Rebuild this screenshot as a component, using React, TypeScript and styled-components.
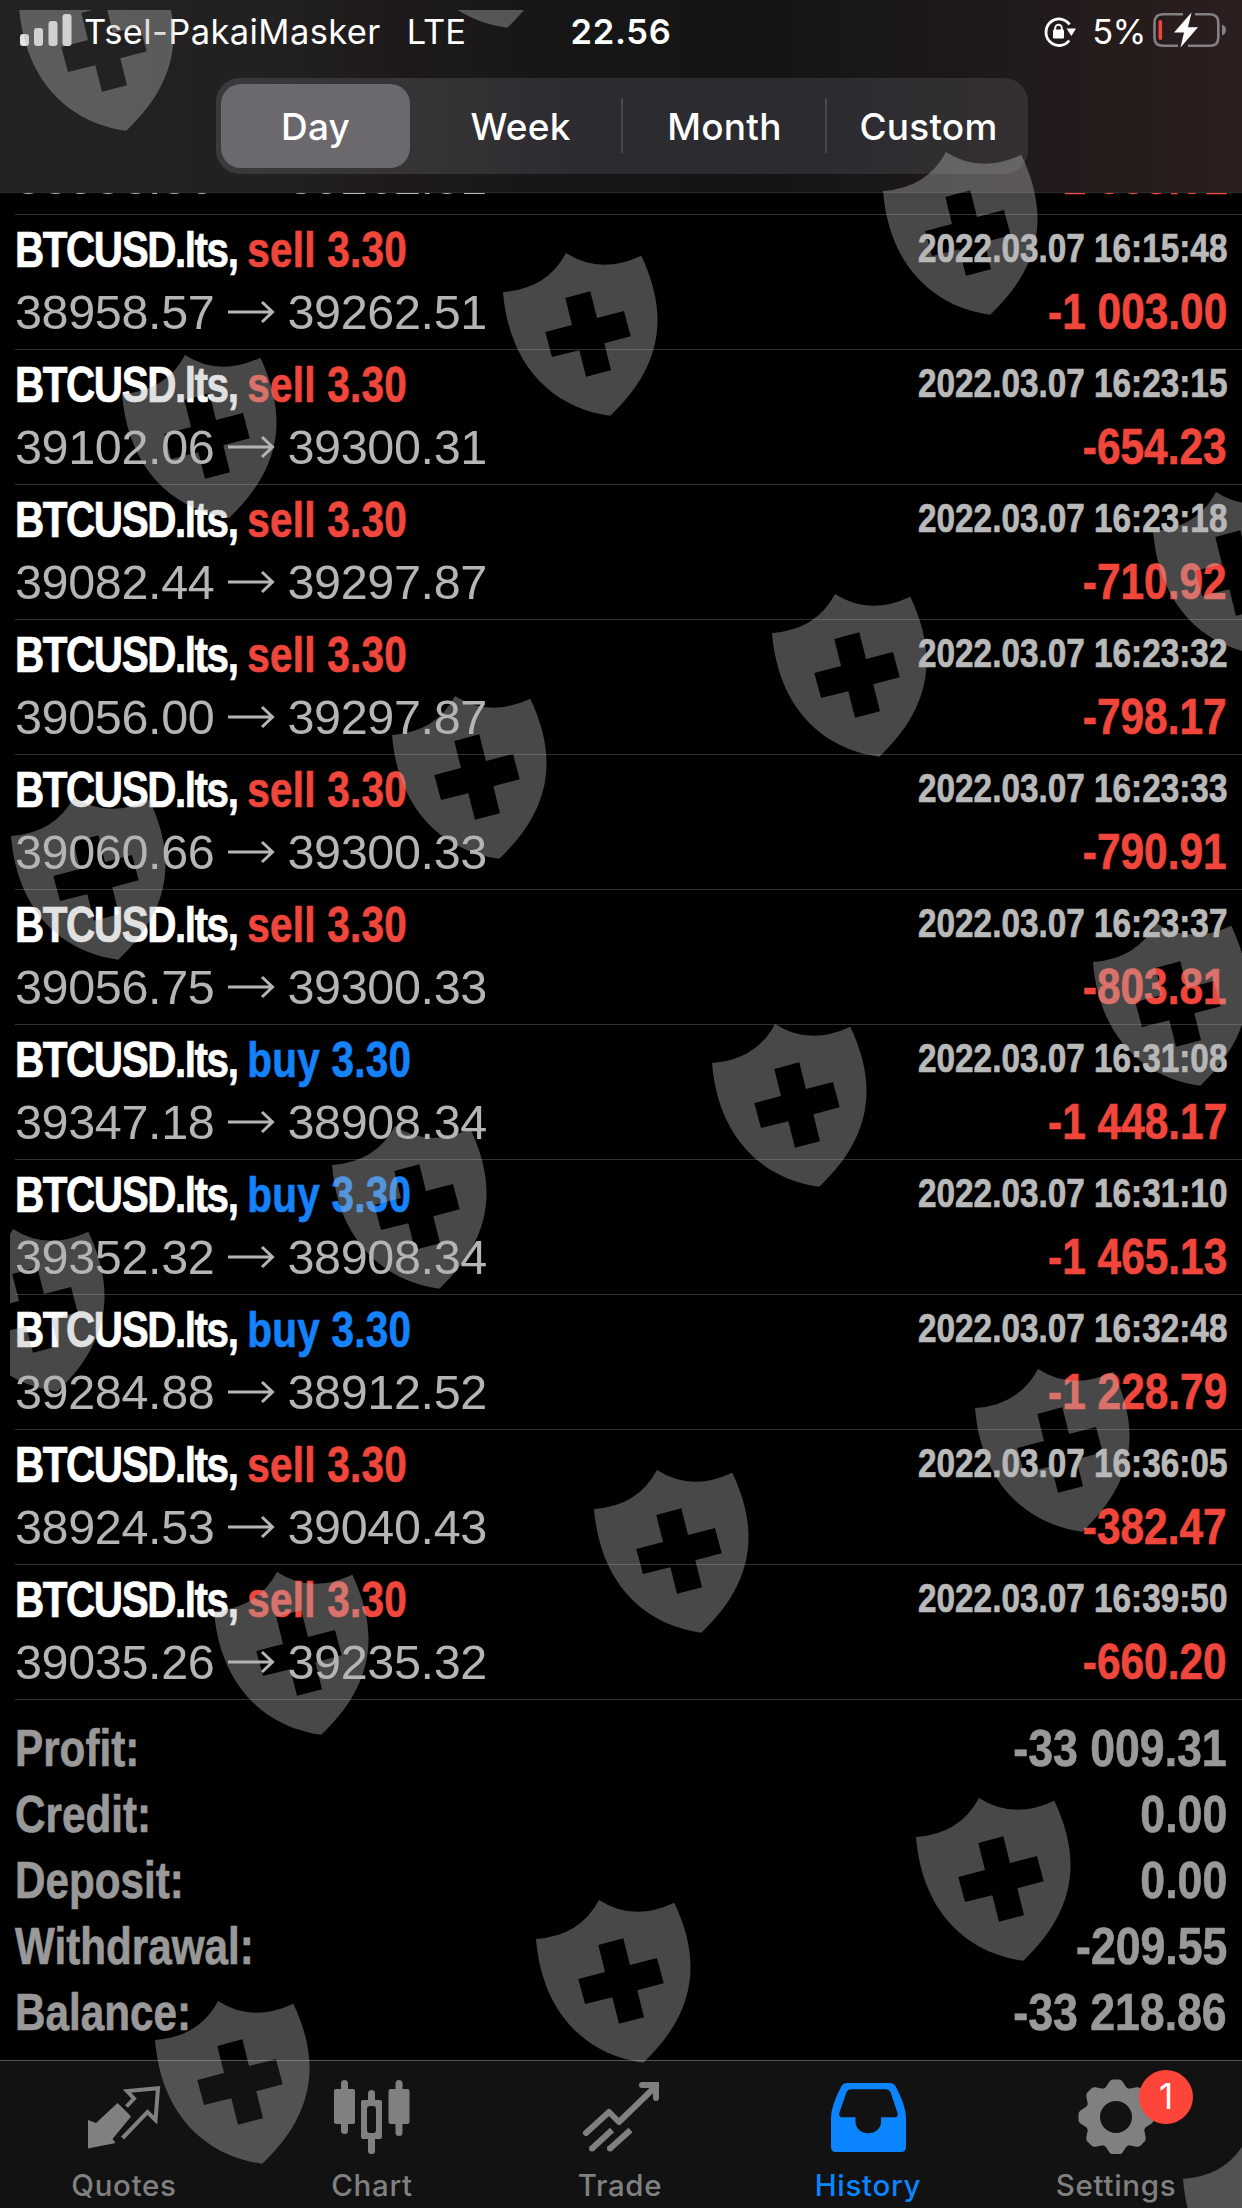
import styled, { createGlobalStyle } from "styled-components";

const GlobalStyle = createGlobalStyle`
  * {
    box-sizing: border-box;
  }
  body {
    margin: 0;
    background-color: black;
  }
`;

const Wrapper = styled.div`
  position: relative;
  display: flex;
  flex-direction: column;
  width: 1242px;
  height: 2208px;
  overflow: hidden;
  background-color: black;
  font-family: "Liberation Sans", Arial, sans-serif;
  white-space: nowrap;
`;

const Header = styled.header`
  height: 193px;
  flex-shrink: 0;
  border-bottom: 1px solid #2c2b2b;
  background: linear-gradient(
    90deg,
    #232323 0%,
    #222020 22%,
    #1e1a1b 32%,
    #161616 45%,
    #151515 62%,
    #1e1919 78%,
    #2c1e1e 100%
  );
  font-family: Inter, sans-serif;
  color: white;
`;

const StatusBar = styled.div`
  display: grid;
  grid-template-columns: 1fr auto 1fr;
  height: 78px;
  padding: 0 15px 0 20px;
  line-height: 63px;
  font-size: 34.5px;
`;

const StatusSide = styled.div<{ $end?: boolean }>`
  display: flex;
  align-items: flex-start;
  justify-content: ${(props) => (props.$end ? "flex-end" : "flex-start")};
  svg {
    flex-shrink: 0;
  }
`;

const Carrier = styled.span`
  margin: 0 26px 0 12px;
  letter-spacing: 0.4px;
`;

const Clock = styled.span`
  margin-right: 5px;
  font-weight: 600;
  letter-spacing: 0.7px;
`;

const Percent = styled.span`
  margin: 0 7px 0 15px;
  letter-spacing: -0.5px;
`;

const Segments = styled.div`
  display: flex;
  width: 812px;
  height: 96px;
  margin-left: 216px;
  padding: 6px 0 6px 5px;
  border-radius: 24px;
  background: linear-gradient(90deg, #3a393c 0%, #353235 30%, #2c2b30 45%, #2c2b30 75%, #343031 100%);
`;

const Segment = styled.div<{ $selected?: boolean; $divider?: boolean }>`
  position: relative;
  display: flex;
  align-items: center;
  justify-content: center;
  flex-shrink: 0;
  width: ${(props) => (props.$selected ? 189 : 204)}px;
  margin-right: ${(props) => (props.$selected ? 8.5 : 0)}px;
  border-radius: 20px;
  background-color: ${(props) => (props.$selected ? "#6b696d" : "transparent")};
  font-size: 37px;
  font-weight: 500;
  letter-spacing: 0.2px;
  &::after {
    content: "";
    display: ${(props) => (props.$divider ? "block" : "none")};
    position: absolute;
    right: 0;
    top: 14px;
    width: 2px;
    height: 55px;
    background-color: #49484c;
  }
`;

const History = styled.main`
  flex: 1;
  min-height: 0;
  overflow: hidden;
`;

const Deal = styled.div`
  height: 135px;
  margin-left: 15px;
  padding: 5px 15px 0 0;
  border-top: 1px solid #323232;
`;

// the deal scrolled under the header, only the bottom of its prices shows
const ClippedDeal = styled.div`
  display: flex;
  flex-direction: column;
  justify-content: flex-end;
  height: 21px;
  margin-left: 15px;
  padding: 0 15px 5px 0;
  overflow: hidden;
`;

const DealLine = styled.div<{ $height: number }>`
  display: flex;
  flex-shrink: 0;
  justify-content: space-between;
  height: ${(props) => props.$height}px;
`;

const Squeezed = styled.span<{ $scale: number; $right?: boolean }>`
  display: block;
  font-weight: 700;
  -webkit-text-stroke: 0.7px currentColor;
  transform: scaleX(${(props) => props.$scale});
  transform-origin: ${(props) => (props.$right ? "right" : "left")} center;
`;

const Title = styled(Squeezed)`
  color: white;
  font-size: 50px;
  line-height: 60px;
`;

const Ticker = styled.span`
  letter-spacing: -1.8px;
`;

const Side = styled.span<{ $buy: boolean }>`
  color: ${(props) => (props.$buy ? "#1482fb" : "#f0463b")};
  letter-spacing: 0.3px;
`;

const Time = styled(Squeezed)`
  color: #b9b9b9;
  font-size: 40px;
  line-height: 57px;
`;

const Prices = styled.div`
  display: flex;
  align-items: center;
  color: #b5b5b5;
  font-size: 48.5px;
  letter-spacing: -0.35px;
  line-height: 65px;
  svg {
    margin: 0 12.5px;
  }
`;

const Profit = styled(Squeezed)`
  color: #f0463b;
  font-size: 50px;
  line-height: 65px;
`;

const Summary = styled.div`
  margin-left: 15px;
  padding: 15px 15px 0 0;
  border-top: 1px solid #323232;
`;

const SummaryRow = styled.div`
  display: flex;
  justify-content: space-between;
  color: #999;
  font-size: 52px;
  line-height: 66px;
`;

const TabBar = styled.nav`
  display: grid;
  grid-template-columns: repeat(5, 1fr);
  flex-shrink: 0;
  height: 148px;
  padding-right: 2px;
  border-top: 1px solid #555;
  background-color: #121212;
`;

const Tab = styled.div<{ $active?: boolean }>`
  position: relative;
  display: flex;
  flex-direction: column;
  align-items: center;
  padding-top: 15px;
  color: ${(props) => (props.$active ? "#0b84ff" : "#808080")};
  font-family: Inter, sans-serif;
  font-size: 29.5px;
  font-weight: 500;
  letter-spacing: 0.7px;
  line-height: 40px;
  svg {
    margin-bottom: 11px;
  }
`;

const Badge = styled.span`
  position: absolute;
  left: 147px;
  top: 9px;
  width: 54px;
  height: 54px;
  border-radius: 50%;
  background-color: #ff453a;
  color: white;
  font-size: 35px;
  font-weight: 400;
  line-height: 53px;
  letter-spacing: 0;
  text-align: center;
`;

const Overlay = styled.div`
  position: absolute;
  left: 10px;
  top: 10px;
  right: 0;
  bottom: 0;
  overflow: hidden;
  pointer-events: none;
`;

const ShieldMark = styled.svg<{ $x: number; $y: number }>`
  position: absolute;
  left: ${(props) => props.$x - 10}px;
  top: ${(props) => props.$y - 10}px;
`;

const deals = [
  { side: "sell", time: "2022.03.07 16:15:48", open: "38958.57", close: "39262.51", profit: "-1 003.00" },
  { side: "sell", time: "2022.03.07 16:23:15", open: "39102.06", close: "39300.31", profit: "-654.23" },
  { side: "sell", time: "2022.03.07 16:23:18", open: "39082.44", close: "39297.87", profit: "-710.92" },
  { side: "sell", time: "2022.03.07 16:23:32", open: "39056.00", close: "39297.87", profit: "-798.17" },
  { side: "sell", time: "2022.03.07 16:23:33", open: "39060.66", close: "39300.33", profit: "-790.91" },
  { side: "sell", time: "2022.03.07 16:23:37", open: "39056.75", close: "39300.33", profit: "-803.81" },
  { side: "buy", time: "2022.03.07 16:31:08", open: "39347.18", close: "38908.34", profit: "-1 448.17" },
  { side: "buy", time: "2022.03.07 16:31:10", open: "39352.32", close: "38908.34", profit: "-1 465.13" },
  { side: "buy", time: "2022.03.07 16:32:48", open: "39284.88", close: "38912.52", profit: "-1 228.79" },
  { side: "sell", time: "2022.03.07 16:36:05", open: "38924.53", close: "39040.43", profit: "-382.47" },
  { side: "sell", time: "2022.03.07 16:39:50", open: "39035.26", close: "39235.32", profit: "-660.20" },
];

const summary = [
  ["Profit:", "-33 009.31"],
  ["Credit:", "0.00"],
  ["Deposit:", "0.00"],
  ["Withdrawal:", "-209.55"],
  ["Balance:", "-33 218.86"],
];

const shields = [
  [19.3, -32],
  [399.7, -135],
  [883, 152],
  [502.7, 253],
  [122, 354.7],
  [1152.7, 492.3],
  [772, 593.7],
  [391.5, 695.5],
  [11, 797],
  [1093, 922.5],
  [712.3, 1024],
  [331.5, 1126],
  [-50, 1228.5],
  [974.8, 1368.5],
  [594, 1470],
  [213.7, 1571.5],
  [916, 1798],
  [535.5, 1899.7],
  [155, 2001.3],
  [1183, 2140],
];

function Shield({ x, y }: { x: number; y: number }) {
  return (
    <ShieldMark $x={x} $y={y} width="156" height="164" viewBox="0 0 156 164">
      <path
        fill="#b4b4b4"
        fillOpacity="0.4"
        fillRule="evenodd"
        d="M0 39Q44 36 63 0Q97 22 138.3 2.7C164 57 163 110 107.3 162.7C50 155 6 113 0 39Z
          M62.3 45L87.3 38.3L94 65L121 58L127.7 83.3L101.3 90.3L108 117.3L83 123.7L76.3 97.3L49 104L42.3 79L69 72Z"
      />
    </ShieldMark>
  );
}

function SignalIcon() {
  return (
    <svg width="52" height="50" fill="#e4e4e4">
      <rect x="0" y="34" width="9" height="12" rx="3" />
      <rect x="14" y="28" width="9" height="18" rx="3" />
      <rect x="28.5" y="21" width="9" height="25" rx="3" />
      <rect x="42.5" y="14" width="9" height="32" rx="3" />
    </svg>
  );
}

function RotationLockIcon() {
  return (
    <svg width="34" height="50" fill="none" stroke="white" strokeWidth="2.8">
      <path d="M26.6 24.5A13 13.3 0 1 0 26.2 40.5" />
      <path d="M23.5 28.5H33L28.4 36Z" fill="white" stroke="none" />
      <rect x="10" y="29.5" width="11" height="9" rx="1.2" fill="white" stroke="none" />
      <path d="M12.2 31V28A3.3 3.3 0 0 1 18.8 28V31" strokeWidth="1.9" />
    </svg>
  );
}

function BatteryIcon() {
  return (
    <svg width="74" height="54">
      <path d="M30 14.2H10Q1.5 14.2 1.5 23V37.5Q1.5 45.8 10 45.8H25" fill="none" stroke="#848080" strokeWidth="2.6" />
      <path d="M42 14.2H57Q65.3 14.2 65.3 23V37.5Q65.3 45.8 57 45.8H35" fill="none" stroke="#848080" strokeWidth="2.6" />
      <path d="M69 24.5Q73 26 73 30Q73 34 69 35.5Z" fill="#848080" />
      <rect x="5.5" y="20" width="3.6" height="20" rx="1.8" fill="#f0463b" />
      <path d="M38.5 12.5L21 32.5H31L27.5 47.5L45 27.3H35Z" fill="white" />
    </svg>
  );
}

function ArrowIcon() {
  return (
    <svg width="48" height="24" fill="none" stroke="#b5b5b5" strokeWidth="3">
      <path d="M1 12H45.5M35 2L45.5 12L35 22" />
    </svg>
  );
}

function QuotesIcon() {
  return (
    <svg width="78" height="78" fill="none" stroke="#808080">
      <path d="M3 44L11 47L32.5 27Q38 32 46 40.5L27.5 63L30.5 67L3 72.5Z" fill="#808080" stroke="none" />
      <path d="M41.5 30.5L49 22.5L42 15L73 12.2L70.5 44L62.5 36L37.5 62" strokeWidth="4" />
    </svg>
  );
}

function ChartIcon() {
  return (
    <svg width="76" height="78" fill="#808080">
      <rect x="0" y="13" width="21" height="35" rx="2" />
      <rect x="7" y="4" width="7" height="54" rx="3.5" />
      <path fillRule="evenodd" d="M29 24H46Q48 24 48 26V61Q48 63 46 63H29Q27 63 27 61V26Q27 24 29 24ZM36 30Q33 30 33 33V54Q33 57 36 57H39Q42 57 42 54V33Q42 30 39 30Z" />
      <rect x="34" y="14" width="7" height="13" rx="3.5" />
      <rect x="34" y="60" width="7" height="18" rx="3" />
      <rect x="54.5" y="13" width="21" height="35" rx="2" />
      <rect x="61.5" y="4" width="7" height="56" rx="3.5" />
    </svg>
  );
}

function TradeIcon() {
  return (
    <svg width="78" height="78" fill="none" stroke="#808080" strokeWidth="6" strokeLinejoin="round">
      <path d="M5 57L28 36L38 46L75 10" strokeLinecap="round" />
      <path d="M61 9H75V22" strokeLinecap="round" strokeLinejoin="miter" />
      <path d="M10.5 73L31 54M28.5 73L49.5 54" />
      <circle cx="11" cy="72.5" r="3" fill="#808080" stroke="none" />
      <circle cx="29" cy="72.5" r="3" fill="#808080" stroke="none" />
    </svg>
  );
}

function HistoryIcon() {
  return (
    <svg width="75" height="78" fill="#0b84ff">
      <path
        fillRule="evenodd"
        d="M16 7H59Q63 7 65 11Q75 30 75 42V71Q75 76 70 76H5Q0 76 0 71V42Q0 30 10 11Q12 7 16 7Z
          M20 13.3Q17 13.3 15.5 16L8.3 37Q7.5 41 11 41.3H24.5V46A12.5 11 0 0 0 50 46V41.3H64Q67.5 41 66.5 37L59.5 16Q58 13.3 55 13.3Z"
      />
    </svg>
  );
}

function SettingsIcon() {
  const teeth = [0, 45, 90, 135, 180, 225, 270, 315];
  return (
    <svg width="76" height="78" viewBox="-38 -41 76 78">
      <circle r="23.5" fill="none" stroke="#808080" strokeWidth="15" />
      {teeth.map((angle) => (
        <path key={angle} transform={`rotate(${angle})`} d="M-11.5 -28L-6.5 -35.5Q-5 -37.5 -3 -37.5H3Q5 -37.5 6.5 -35.5L11.5 -28Z" fill="#808080" />
      ))}
    </svg>
  );
}

function PriceLine({ open, close, profit }: { open: string; close: string; profit: string }) {
  return (
    <DealLine $height={64}>
      <Prices>
        {open}
        <ArrowIcon />
        {close}
      </Prices>
      <Profit $scale={0.848} $right>{profit}</Profit>
    </DealLine>
  );
}

function App() {
  return (
    <Wrapper>
      <GlobalStyle />
      <Header>
        <StatusBar>
          <StatusSide>
            <SignalIcon />
            <Carrier>Tsel-PakaiMasker</Carrier>
            <span>LTE</span>
          </StatusSide>
          <Clock>22.56</Clock>
          <StatusSide $end>
            <RotationLockIcon />
            <Percent>5%</Percent>
            <BatteryIcon />
          </StatusSide>
        </StatusBar>
        <Segments>
          <Segment $selected>Day</Segment>
          <Segment $divider>Week</Segment>
          <Segment $divider>Month</Segment>
          <Segment>Custom</Segment>
        </Segments>
      </Header>
      <History>
        <ClippedDeal>
          <PriceLine open="38958.56" close="39262.51" profit="-1 003.01" />
        </ClippedDeal>
        {deals.map((deal) => (
          <Deal key={deal.time}>
            <DealLine $height={60}>
              <Title $scale={0.81}>
                <Ticker>BTCUSD.lts, </Ticker>
                <Side $buy={deal.side === "buy"}>{deal.side} 3.30</Side>
              </Title>
              <Time $scale={0.833} $right>{deal.time}</Time>
            </DealLine>
            <PriceLine open={deal.open} close={deal.close} profit={deal.profit} />
          </Deal>
        ))}
        <Summary>
          {summary.map(([label, value]) => (
            <SummaryRow key={label}>
              <Squeezed $scale={0.812}>{label}</Squeezed>
              <Squeezed $scale={0.858} $right>{value}</Squeezed>
            </SummaryRow>
          ))}
        </Summary>
      </History>
      <TabBar>
        <Tab>
          <QuotesIcon />
          Quotes
        </Tab>
        <Tab>
          <ChartIcon />
          Chart
        </Tab>
        <Tab>
          <TradeIcon />
          Trade
        </Tab>
        <Tab $active>
          <HistoryIcon />
          History
        </Tab>
        <Tab>
          <SettingsIcon />
          Settings
          <Badge>1</Badge>
        </Tab>
      </TabBar>
      <Overlay>
        {shields.map(([x, y]) => (
          <Shield key={`${x}_${y}`} x={x} y={y} />
        ))}
      </Overlay>
    </Wrapper>
  );
}

export default App;
